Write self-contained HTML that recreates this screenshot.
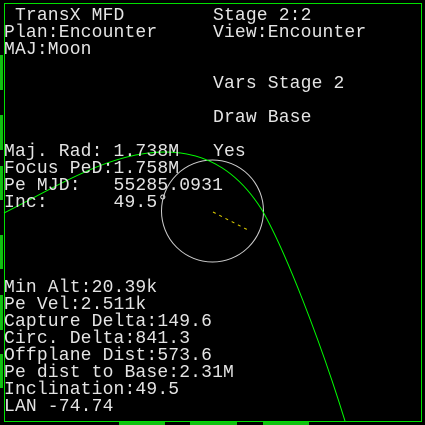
<!DOCTYPE html>
<html><head><style>
html,body{margin:0;padding:0;background:#000;width:425px;height:425px;overflow:hidden}
.t{position:absolute;font-family:"Liberation Mono",monospace;font-size:18px;line-height:17px;color:#e4e4e4;white-space:pre;letter-spacing:0.15px}
.tab{position:absolute;background:#10c010}
</style></head><body>
<svg width="425" height="425" style="position:absolute;left:0;top:0">
<rect x="4.5" y="3.5" width="417" height="418" fill="none" stroke="#00e000" stroke-width="1"/>
<circle cx="212.5" cy="211" r="51" fill="none" stroke="#d0d0d0" stroke-width="1"/>
<path d="M4,213 C60,185 110,152 165,152 C210,152 240,175 262,210 C285,250 320,340 345,421" fill="none" stroke="#00ff00" stroke-width="1"/>
<line x1="213" y1="212" x2="248" y2="230" stroke="#e0d000" stroke-width="1" stroke-dasharray="3,4"/>
</svg>
<div class="tab" style="left:0;top:55px;width:3px;height:35px"></div>
<div class="tab" style="left:0;top:115px;width:3px;height:35px"></div>
<div class="tab" style="left:0;top:166px;width:3px;height:34px"></div>
<div class="tab" style="left:0;top:235px;width:3px;height:34px"></div>
<div class="tab" style="left:0;top:295px;width:3px;height:35px"></div>
<div class="tab" style="left:0;top:354px;width:3px;height:34px"></div>
<div class="tab" style="left:119px;top:422px;width:46px;height:3px"></div>
<div class="tab" style="left:190px;top:422px;width:47px;height:3px"></div>
<div class="tab" style="left:263px;top:422px;width:46px;height:3px"></div>
<div class="t" style="left:4px;top:8px"> TransX MFD
Plan:Encounter
MAJ:Moon
 
 
 
 
 
Maj. Rad: 1.738M
Focus PeD:1.758M
Pe MJD:   55285.0931
Inc:      49.5°
 
 
 
 
Min Alt:20.39k
Pe Vel:2.511k
Capture Delta:149.6
Circ. Delta:841.3
Offplane Dist:573.6
Pe dist to Base:2.31M
Inclination:49.5
LAN -74.74</div>
<div class="t" style="left:213px;top:8px">Stage 2:2
View:Encounter
 
 
Vars Stage 2
 
Draw Base
 
Yes</div>
</body></html>
